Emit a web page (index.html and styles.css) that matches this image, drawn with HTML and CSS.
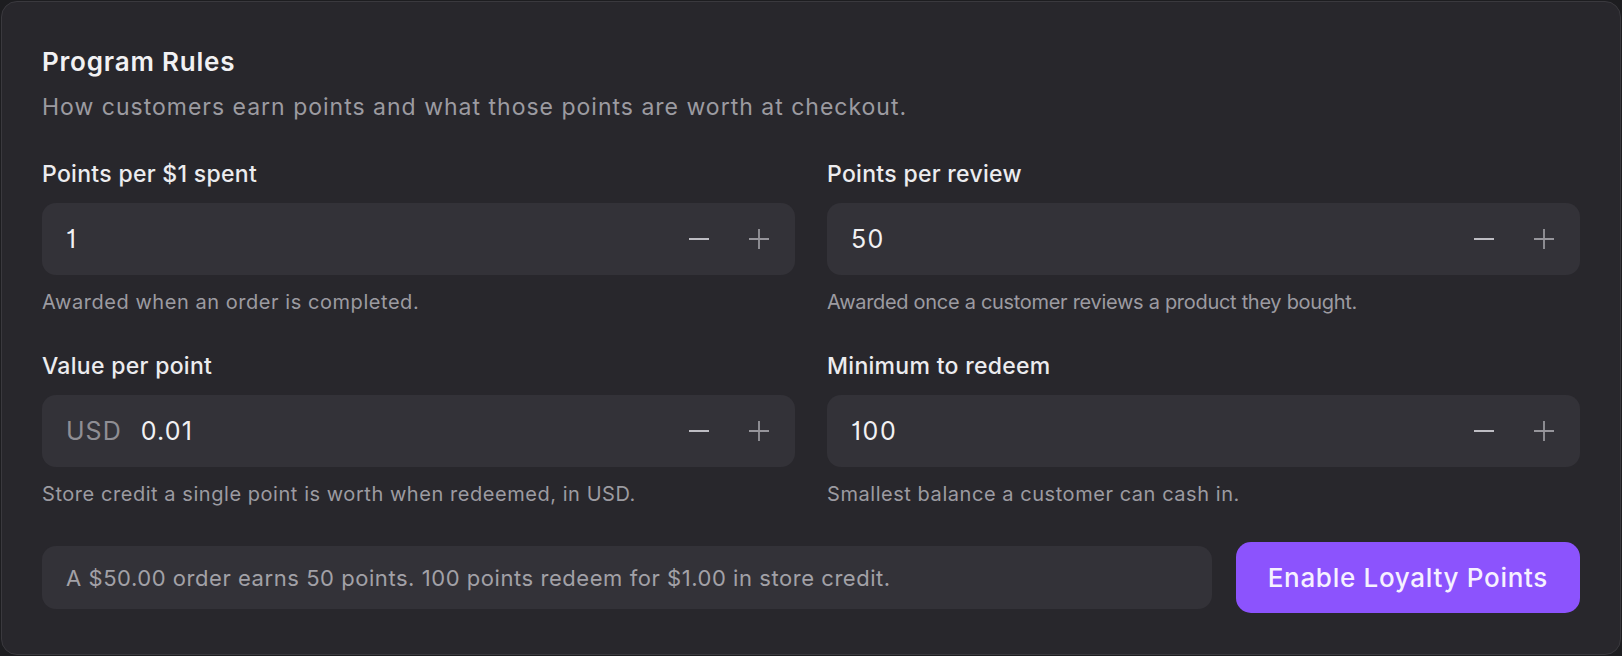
FILE: index.html
```html
<!DOCTYPE html>
<html lang="en">
<head>
<meta charset="utf-8">
<title>Program Rules</title>
<link rel="stylesheet" href="styles.css">
</head>
<body>
<section class="card">
  <h2 class="title">Program Rules</h2>
  <p class="subtitle">How customers earn points and what those points are worth at checkout.</p>

  <div class="grid">
    <div class="field">
      <label class="label">Points per $1 spent</label>
      <div class="input">
        <span class="value alt1">1</span>
        <div class="steppers">
          <button class="step minus" aria-label="Decrease"><svg viewBox="0 0 20 20"><path d="M0 10H20"/></svg></button>
          <button class="step plus" aria-label="Increase"><svg viewBox="0 0 20 20"><path d="M0 10H20M10 0V20"/></svg></button>
        </div>
      </div>
      <p class="help">Awarded when an order is completed.</p>
    </div>

    <div class="field">
      <label class="label">Points per review</label>
      <div class="input">
        <span class="value">50</span>
        <div class="steppers">
          <button class="step minus" aria-label="Decrease"><svg viewBox="0 0 20 20"><path d="M0 10H20"/></svg></button>
          <button class="step plus" aria-label="Increase"><svg viewBox="0 0 20 20"><path d="M0 10H20M10 0V20"/></svg></button>
        </div>
      </div>
      <p class="help help-tight">Awarded once a customer reviews a product they bought.</p>
    </div>

    <div class="field">
      <label class="label">Value per point</label>
      <div class="input">
        <span class="prefix">USD</span>
        <span class="value">0.01</span>
        <div class="steppers">
          <button class="step minus" aria-label="Decrease"><svg viewBox="0 0 20 20"><path d="M0 10H20"/></svg></button>
          <button class="step plus" aria-label="Increase"><svg viewBox="0 0 20 20"><path d="M0 10H20M10 0V20"/></svg></button>
        </div>
      </div>
      <p class="help">Store credit a single point is worth when redeemed, in USD.</p>
    </div>

    <div class="field">
      <label class="label">Minimum to redeem</label>
      <div class="input">
        <span class="value alt1">100</span>
        <div class="steppers">
          <button class="step minus" aria-label="Decrease"><svg viewBox="0 0 20 20"><path d="M0 10H20"/></svg></button>
          <button class="step plus" aria-label="Increase"><svg viewBox="0 0 20 20"><path d="M0 10H20M10 0V20"/></svg></button>
        </div>
      </div>
      <p class="help">Smallest balance a customer can cash in.</p>
    </div>
  </div>

  <div class="footer">
    <div class="summary">A $50.00 order earns 50 points. 100 points redeem for $1.00 in store credit.</div>
    <button class="cta">Enable Loyalty Points</button>
  </div>
</section>
</body>
</html>
```

FILE: styles.css
```css
* { box-sizing: border-box; }

html, body {
  margin: 0;
  background: #1d1d20;
}

body {
  padding: 1px;
  font-family: Inter, "Liberation Sans", sans-serif;
}

.card {
  height: 654px;
  background: #28272c;
  border: 1px solid #3a393e;
  border-radius: 16px;
  padding: 44px 40px 40px;
  display: flex;
  flex-direction: column;
}

.title {
  margin: 0;
  font-size: 26px;
  line-height: 32px;
  font-weight: 600;
  color: #f1f1f3;
  letter-spacing: 0.8px;
}

.subtitle {
  margin: 15px 0 0;
  font-size: 23px;
  line-height: 28px;
  color: #9c9ba1;
  letter-spacing: 1px;
}

.grid {
  margin-top: 39px;
  display: grid;
  grid-template-columns: 1fr 1fr;
  column-gap: 32px;
  row-gap: 38px;
}

.field {
  display: flex;
  flex-direction: column;
}

.label {
  font-size: 23px;
  line-height: 28px;
  font-weight: 500;
  color: #ececef;
  letter-spacing: 0.3px;
}

.input {
  margin-top: 15px;
  height: 72px;
  background: #333238;
  border-radius: 14px;
  display: flex;
  align-items: center;
  padding: 0 14px 0 24px;
}

.prefix {
  font-size: 25px;
  color: #8f8e94;
  margin-right: 19px;
  letter-spacing: 1px;
}

.value {
  font-size: 25px;
  color: #f1f1f3;
  flex: 1;
  letter-spacing: 1.2px;
}

.alt1 {
  font-feature-settings: "cv01";
  letter-spacing: 1.6px;
}

.steppers {
  display: flex;
  gap: 16px;
}

.step {
  width: 44px;
  height: 44px;
  padding: 0;
  border: 0;
  background: transparent;
  display: flex;
  align-items: center;
  justify-content: center;
}

.step svg {
  width: 20px;
  height: 20px;
  fill: none;
  stroke-width: 2;
}

.minus svg { stroke: #bebdc3; }
.plus svg { stroke: #96959b; stroke-width: 1.8; }

.help {
  margin: 15px 0 0;
  font-size: 20px;
  line-height: 24px;
  color: #9c9ba1;
  letter-spacing: 0.55px;
}

.help-tight {
  letter-spacing: -0.3px;
}

.footer {
  margin-top: 36px;
  display: flex;
  align-items: center;
  gap: 24px;
}

.summary {
  flex: 1;
  height: 63px;
  background: #333238;
  border-radius: 14px;
  display: flex;
  align-items: center;
  padding: 0 24px;
  font-size: 22px;
  color: #a2a1a7;
  letter-spacing: 0.55px;
}

.cta {
  height: 71px;
  padding: 0 32px;
  border: 0;
  border-radius: 15px;
  background: #8c53fd;
  color: #f6f1ff;
  font-family: Inter, "Liberation Sans", sans-serif;
  font-size: 26px;
  font-weight: 500;
  letter-spacing: 0.7px;
}
```
